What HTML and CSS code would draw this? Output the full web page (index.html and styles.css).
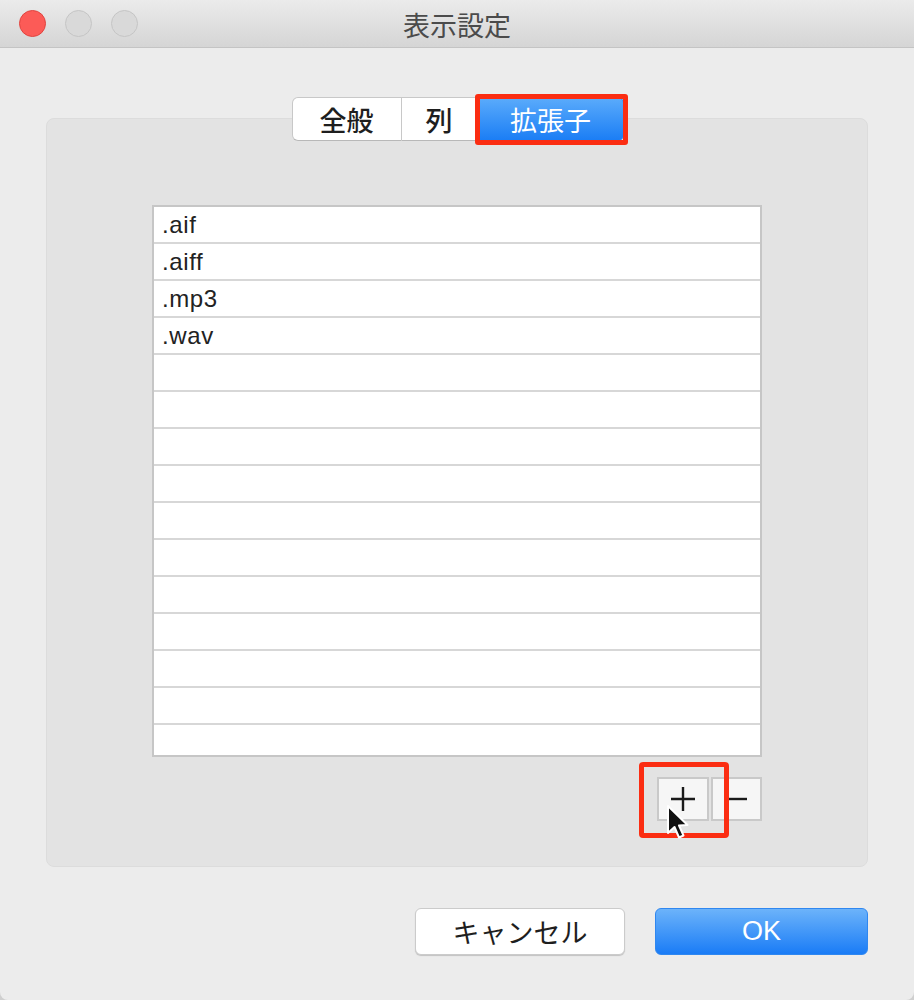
FILE: index.html
```html
<html>
<head>
    <meta charset="utf-8">
    <title>表示設定</title>
    <link rel="stylesheet" href="styles.css">
</head>
<body>
<div class="window">
    <div class="titlebar">
        <div class="lights">
            <span class="light close"></span>
            <span class="light"></span>
            <span class="light"></span>
        </div>
        <div class="title">表示設定</div>
        <div></div>
    </div>

    <div class="tabs">
        <span class="tab tab-general">全般</span>
        <span class="tab tab-columns">列</span>
        <span class="tab tab-ext selected marked">拡張子</span>
    </div>

    <div class="group">
        <div class="ext-pane">
            <div class="ext-list">
                <div class="row">.aif</div>
                <div class="row">.aiff</div>
                <div class="row">.mp3</div>
                <div class="row">.wav</div>
                <div class="row"></div>
                <div class="row"></div>
                <div class="row"></div>
                <div class="row"></div>
                <div class="row"></div>
                <div class="row"></div>
                <div class="row"></div>
                <div class="row"></div>
                <div class="row"></div>
                <div class="row"></div>
                <div class="row"></div>
            </div>
            <div class="list-buttons">
                <span class="small-btn add marked-add">
                    <svg width="26" height="26" viewBox="0 0 26 26"><path d="M13 1v24M1 13h24" stroke="#1a1a1a" stroke-width="2.4" fill="none"/></svg>
                    <svg class="cursor" width="28" height="38" viewBox="0 0 28 38">
                        <path d="M3 2 L3 29 L9.5 23 L14 33.5 L18.5 31.5 L14 21.5 L22.5 21 Z" fill="#111" stroke="#fff" stroke-width="2" stroke-linejoin="round"/>
                    </svg>
                </span>
                <span class="small-btn remove">
                    <svg width="22" height="24" viewBox="0 0 22 24"><path d="M1 12h20" stroke="#1a1a1a" stroke-width="2.4" fill="none"/></svg>
                </span>
            </div>
        </div>
    </div>

    <div class="footer">
        <span class="btn cancel">キャンセル</span>
        <span class="btn ok">OK</span>
    </div>
</div>
</body>
</html>
```

FILE: styles.css
```css
body {
  margin: 0;
  background: #cfcfcf;
  font-family: "Noto Sans CJK JP", "Liberation Sans", sans-serif;
}

.window {
  width: 914px;
  height: 1000px;
  background: #ececec;
  border-radius: 0 0 8px 8px;
  overflow: hidden;
  display: flex;
  flex-direction: column;
}

/* title bar */
.titlebar {
  height: 47px;
  border-bottom: 1px solid #c4c4c4;
  background: linear-gradient(#ebebeb, #d5d5d5);
  display: grid;
  grid-template-columns: 1fr auto 1fr;
  align-items: center;
}

.lights {
  display: flex;
  gap: 19px;
  padding-left: 19px;
}

.light {
  width: 25px;
  height: 25px;
  border-radius: 50%;
  background: #d9d9d9;
  border: 1px solid #c5c5c5;
}

.light.close {
  background: #fc5b57;
  border-color: #e0443f;
}

.title {
  font-size: 27px;
  color: #4b4b4b;
  line-height: 1;
  padding-top: 1px;
}

/* segmented tabs */
.tabs {
  margin-top: 49px;
  align-self: center;
  display: flex;
  height: 44px;
  position: relative;
  z-index: 2;
  margin-left: 1px;
}

.tab {
  display: flex;
  align-items: center;
  justify-content: center;
  font-size: 27px;
  font-weight: 500;
  line-height: 1;
  color: #1e1e1e;
  background: #fff;
  border: 1px solid #c8c8c8;
  border-bottom-color: #b8b8b8;
  box-sizing: border-box;
}

.tab-general {
  width: 110px;
  border-radius: 6px 0 0 6px;
}

.tab-columns {
  width: 76px;
  border-left: none;
}

.tab-ext {
  width: 146px;
  border-radius: 0 6px 6px 0;
}

.tab.selected {
  background: linear-gradient(#5aabfb, #1b7ef5);
  border-color: #2a86f2;
  color: #fff;
  font-weight: 400;
}

.marked {
  position: relative;
}

.marked::after {
  content: "";
  position: absolute;
  left: -4px;
  right: -5px;
  top: -4px;
  bottom: -5px;
  border: 5px solid #fb2d12;
  border-radius: 3px;
}

/* group box */
.group {
  margin: -23px 46px 0;
  height: 749px;
  box-sizing: border-box;
  background: #e3e3e3;
  border: 1px solid #dcdcdc;
  border-radius: 8px;
  padding: 86px 0 0 105px;
}

.ext-pane {
  width: 610px;
  display: flex;
  flex-direction: column;
}

.ext-list {
  height: 552px;
  box-sizing: border-box;
  border: 2px solid #c6c6c6;
  background: #fff;
  overflow: hidden;
}

.row {
  height: 37px;
  box-sizing: border-box;
  border-bottom: 2px solid #d7d7d7;
  padding-left: 8px;
  font-family: "Liberation Sans", sans-serif;
  font-size: 24px;
  letter-spacing: 0.6px;
  line-height: 35px;
  color: #222;
}

.list-buttons {
  margin-top: 20px;
  display: flex;
  justify-content: flex-end;
  gap: 2px;
}

.small-btn {
  width: 52px;
  height: 44px;
  box-sizing: border-box;
  background: #f6f6f6;
  border: 2px solid #c9c9c9;
  display: flex;
  align-items: center;
  justify-content: center;
}

.small-btn.remove {
  width: 51px;
}

.marked-add {
  position: relative;
}

.marked-add::after {
  content: "";
  position: absolute;
  left: -20px;
  right: -22px;
  top: -17px;
  bottom: -19px;
  border: 5px solid #fb2d12;
  border-radius: 4px;
}

.cursor {
  position: absolute;
  left: 6px;
  top: 25px;
  z-index: 3;
}

/* dialog buttons */
.footer {
  margin-top: 41px;
  padding-right: 46px;
  display: flex;
  justify-content: flex-end;
  gap: 30px;
}

.btn {
  height: 47px;
  box-sizing: border-box;
  border-radius: 6px;
  display: flex;
  align-items: center;
  justify-content: center;
  font-size: 27px;
  line-height: 1;
}

.cancel {
  width: 210px;
  background: #fff;
  border: 1px solid #cbcbcb;
  box-shadow: 0 1px 1px rgba(0, 0, 0, 0.18);
  color: #1e1e1e;
}

.ok {
  width: 213px;
  background: linear-gradient(#6cb3fa, #1a7cf6);
  border: 1px solid #2f87f0;
  color: #fff;
  font-family: "Liberation Sans", sans-serif;
}
```
